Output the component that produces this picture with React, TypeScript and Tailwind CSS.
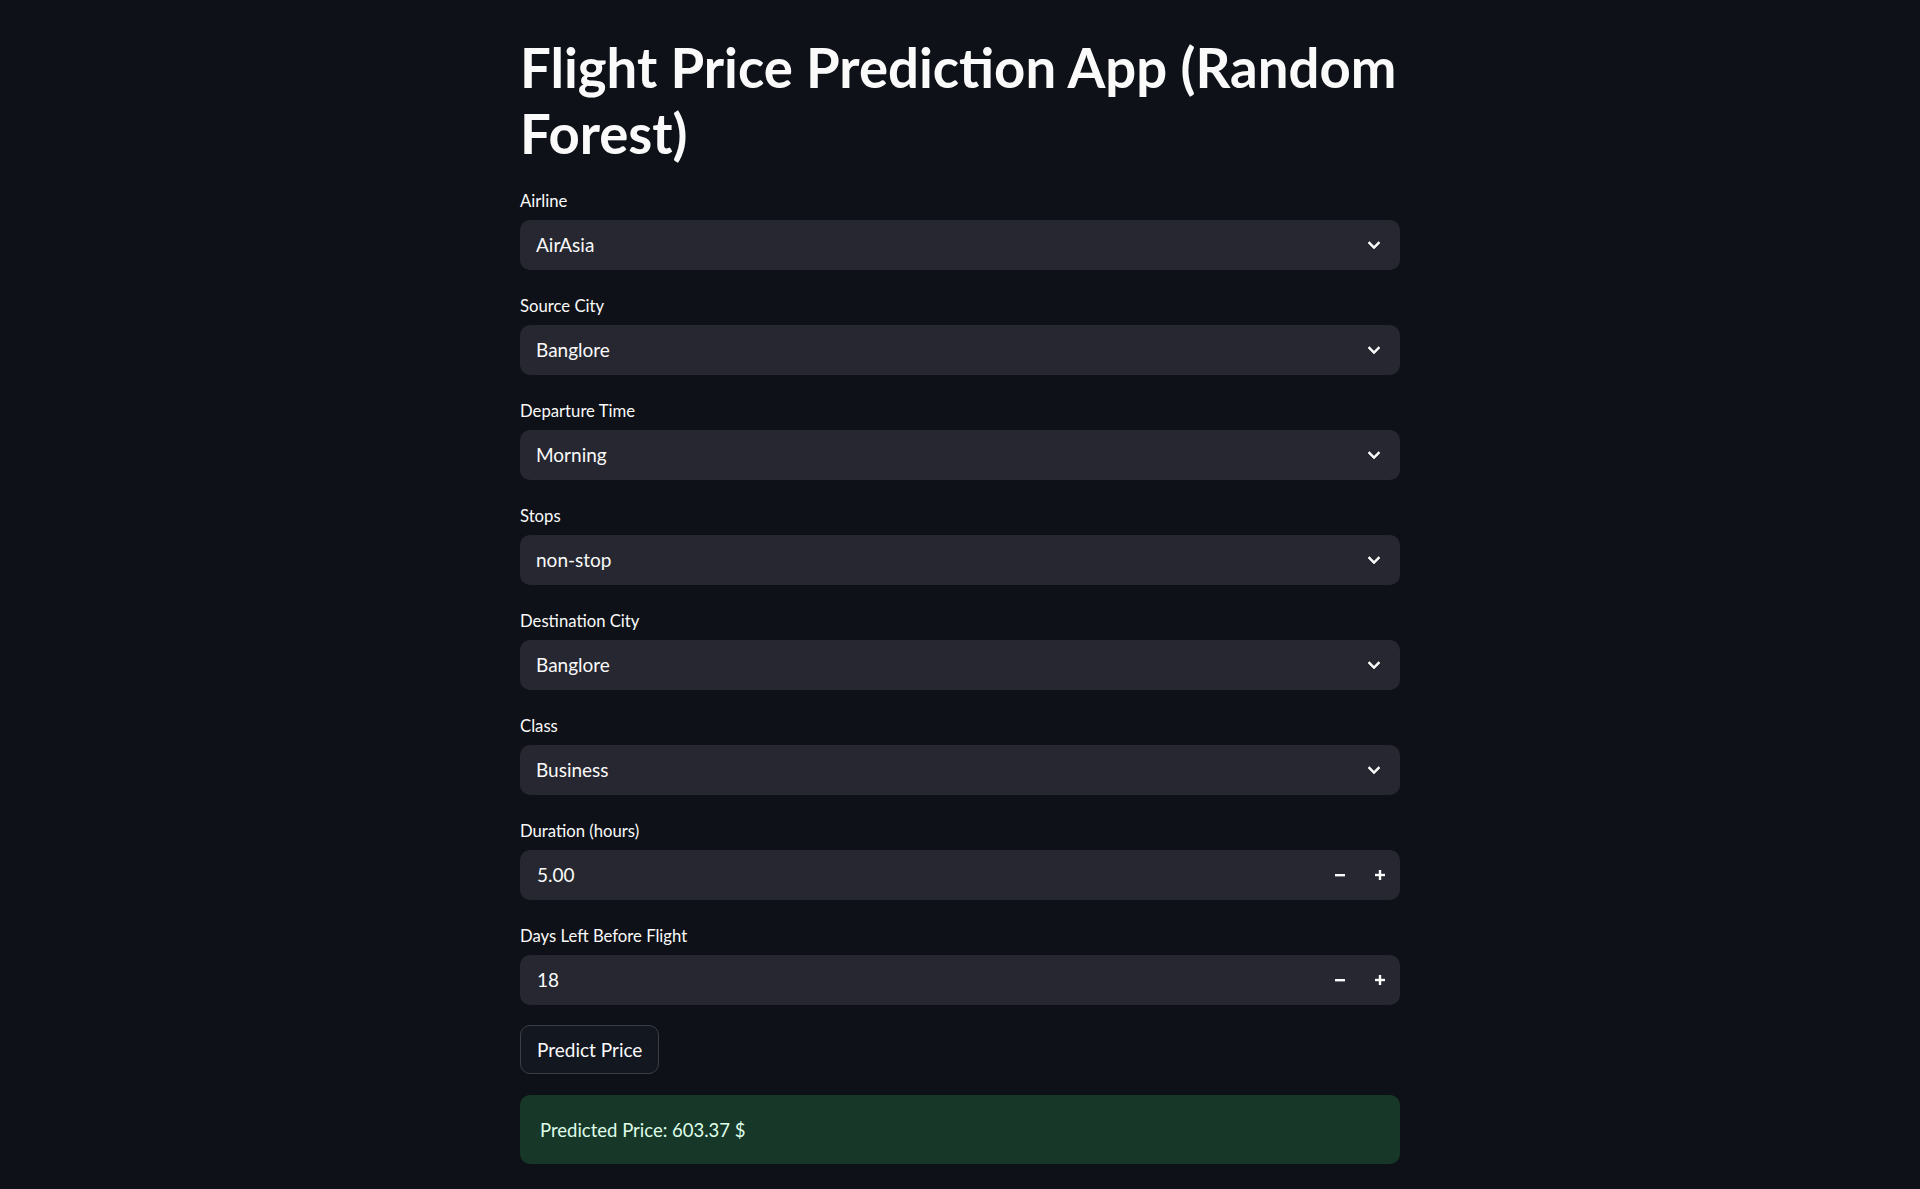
import * as React from 'react';

const selects = [
  { label: 'Airline', value: 'AirAsia' },
  { label: 'Source City', value: 'Banglore' },
  { label: 'Departure Time', value: 'Morning' },
  { label: 'Stops', value: 'non-stop' },
  { label: 'Destination City', value: 'Banglore' },
  { label: 'Class', value: 'Business' },
];

const numbers = [
  { label: 'Duration (hours)', value: '5.00' },
  { label: 'Days Left Before Flight', value: '18' },
];

function Chevron() {
  return (
    <svg viewBox="0 0 24 24" className="h-6 w-6" fill="#fafafa" stroke="#fafafa" strokeWidth="0.6">
      <path d="M7.41 8.59 12 13.17l4.59-4.58L18 10l-6 6-6-6 1.41-1.41z" />
    </svg>
  );
}

function Field({ label, children }: { label: string; children: React.ReactNode }) {
  return (
    <div className="flex flex-col">
      <label className="mb-[5px] flex h-[30px] items-center pt-[3px] text-[16.7px]">{label}</label>
      {children}
    </div>
  );
}

export default function App() {
  return (
    <div
      className="min-h-screen bg-[#0e1117] text-[#fafafa]"
      style={{ fontFamily: '"Source Sans Pro", Lato, "Noto Sans", sans-serif' }}
    >
      <div className="mx-auto w-[880px] pt-[34px] pb-[25px]">
        <h1 className="text-[54.5px] font-bold leading-[66px]">
          Flight Price Prediction App (Random Forest)
        </h1>

        <div className="mt-[19px] flex flex-col gap-[20px]">
          {selects.map((s) => (
            <Field key={s.label} label={s.label}>
              <div className="flex h-[50px] items-center justify-between rounded-[10px] bg-[#262730] pr-[14px] pl-[16px] text-[19px]">
                <span>{s.value}</span>
                <Chevron />
              </div>
            </Field>
          ))}

          {numbers.map((n) => (
            <Field key={n.label} label={n.label}>
              <div className="flex h-[50px] items-center rounded-[10px] bg-[#262730] pl-[17px] text-[19px]">
                <span className="flex-1">{n.value}</span>
                <button className="flex h-full w-[40px] items-center justify-center">
                  <svg viewBox="0 0 12 12" className="h-3 w-3" fill="#fafafa">
                    <rect x="1" y="5" width="10" height="2.4" />
                  </svg>
                </button>
                <button className="flex h-full w-[40px] items-center justify-center">
                  <svg viewBox="0 0 12 12" className="h-3 w-3" fill="#fafafa">
                    <rect x="1" y="4.8" width="10" height="2.4" />
                    <rect x="4.8" y="1" width="2.4" height="10" />
                  </svg>
                </button>
              </div>
            </Field>
          ))}

          <div>
            <button className="h-[49px] rounded-[10px] border border-[#3c3f46] bg-[#131720] px-[16px] pt-[2px] text-[19px]">
              Predict Price
            </button>
          </div>

          <div className="mt-[1px] flex h-[69px] items-center rounded-[10px] bg-[#173828] px-[20px] pt-[2px] text-[18.5px] text-[#dffde9]">
            Predicted Price: 603.37 $
          </div>
        </div>
      </div>
    </div>
  );
}
